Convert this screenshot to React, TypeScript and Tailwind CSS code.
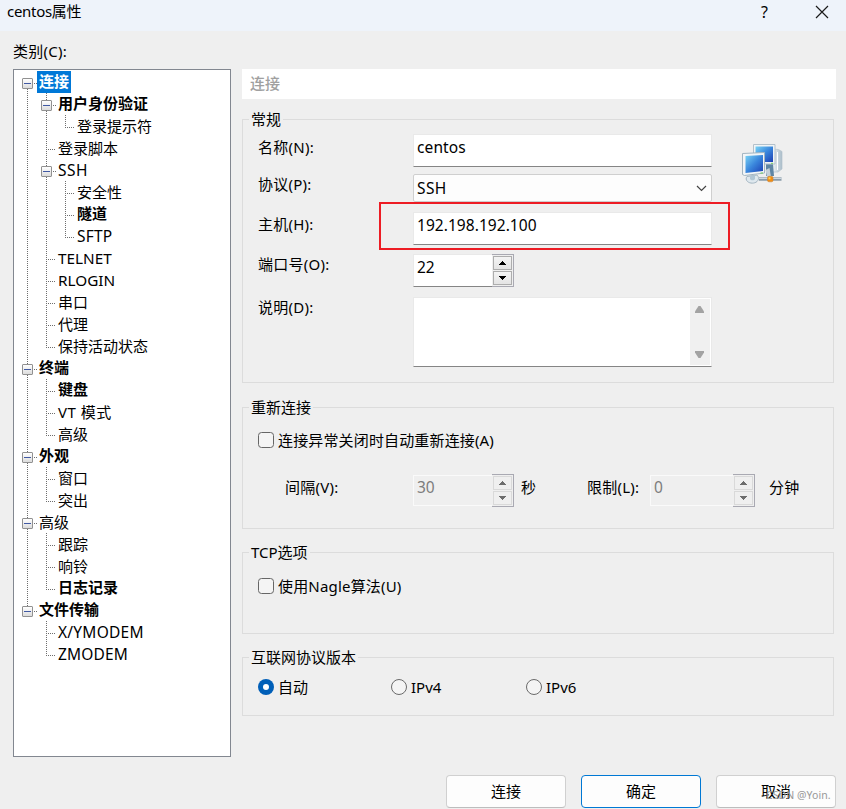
import React from "react";

type Guide = "line" | "blank" | "tee" | "end" | "first" | "mid" | "last";

interface Node {
  guides: Guide[];
  label: string;
  bold?: boolean;
  selected?: boolean;
  className?: string;
}

const NODES: Node[] = [
  { guides: ["first"], label: "连接", bold: true, selected: true },
  { guides: ["line", "mid"], label: "用户身份验证", bold: true },
  { guides: ["line", "line", "end"], label: "登录提示符" },
  { guides: ["line", "tee"], label: "登录脚本" },
  { guides: ["line", "mid"], label: "SSH", className: "text-[15.5px] tracking-[0.5px]" },
  { guides: ["line", "line", "tee"], label: "安全性" },
  { guides: ["line", "line", "tee"], label: "隧道", bold: true },
  { guides: ["line", "line", "end"], label: "SFTP", className: "text-[15.5px] tracking-[0.2px]" },
  { guides: ["line", "tee"], label: "TELNET", className: "text-[15.3px]" },
  { guides: ["line", "tee"], label: "RLOGIN", className: "text-[15.3px]" },
  { guides: ["line", "tee"], label: "串口" },
  { guides: ["line", "tee"], label: "代理" },
  { guides: ["line", "end"], label: "保持活动状态" },
  { guides: ["mid"], label: "终端", bold: true },
  { guides: ["line", "tee"], label: "键盘", bold: true },
  { guides: ["line", "tee"], label: "VT 模式", className: "tracking-[0.5px]" },
  { guides: ["line", "end"], label: "高级" },
  { guides: ["mid"], label: "外观", bold: true },
  { guides: ["line", "tee"], label: "窗口" },
  { guides: ["line", "end"], label: "突出" },
  { guides: ["mid"], label: "高级" },
  { guides: ["line", "tee"], label: "跟踪" },
  { guides: ["line", "tee"], label: "响铃" },
  { guides: ["line", "end"], label: "日志记录", bold: true },
  { guides: ["last"], label: "文件传输", bold: true },
  { guides: ["blank", "tee"], label: "X/YMODEM", className: "text-[15.5px] tracking-[0.25px]" },
  { guides: ["blank", "end"], label: "ZMODEM", className: "text-[15.5px] tracking-[0.15px]" },
];

const V = "w-px bg-[repeating-linear-gradient(to_bottom,#6e6e6e_0_1px,transparent_1px_2px)]";
const H = "h-px bg-[repeating-linear-gradient(to_right,#6e6e6e_0_1px,transparent_1px_2px)]";

function GuideCell({ kind }: { kind: Guide }) {
  if (kind === "blank") return <div className="w-[19px]" />;
  if (kind === "line")
    return (
      <div className="w-[19px] pl-[9px]">
        <div className={`${V} h-[22px]`} />
      </div>
    );
  if (kind === "tee" || kind === "end")
    return (
      <div className="flex w-[19px] items-start pl-[9px]">
        <div className={`${V} ${kind === "tee" ? "h-[22px]" : "h-[13px]"}`} />
        <div className={`${H} mt-3 ml-px w-[7px]`} />
      </div>
    );
  return (
    <div className="flex w-[19px] flex-col pl-1">
      <div className={`ml-[5px] h-[7px] ${kind === "first" ? "" : V}`} />
      <div className="flex items-center">
        <div className="flex h-[11px] w-[11px] shrink-0 items-center justify-center rounded-[1px] border border-[#919191] bg-linear-to-b from-white to-[#dcdcdc]">
          <div className="h-px w-[7px] bg-[#4059a3]" />
        </div>
        <div className={`${H} ml-px w-[3px]`} />
      </div>
      <div className={`ml-[5px] h-1 ${kind === "last" ? "" : V}`} />
    </div>
  );
}

function TreeRow({ node }: { node: Node }) {
  return (
    <div className="flex h-[22px]">
      {node.guides.map((g, i) => (
        <GuideCell key={i} kind={g} />
      ))}
      <span
        className={`h-[22px] px-[2px] whitespace-pre ${node.bold ? "leading-[20px] font-bold" : "leading-[22px]"} ${
          node.selected ? "bg-[#0078d7] text-white" : ""
        } ${node.className ?? ""}`}
      >
        {node.label}
      </span>
    </div>
  );
}

function Group({ title, className, children }: { title: string; className: string; children: React.ReactNode }) {
  return (
    <fieldset className={`w-[592px] border border-[#dcdcdc] ${className}`}>
      <legend className="ml-[6px] h-[21px] px-[2px] leading-[21px] whitespace-nowrap">{title}</legend>
      {children}
    </fieldset>
  );
}

function Label({ className, children }: { className: string; children: React.ReactNode }) {
  return <div className={`shrink-0 leading-5 tracking-[0.25px] whitespace-nowrap ${className}`}>{children}</div>;
}

function TextBox({ className = "", children }: { className?: string; children?: React.ReactNode }) {
  return (
    <div
      className={`h-[33px] w-[299px] border border-[#e9e9e9] border-b-[#858585] bg-white pl-[3px] text-[15.5px] leading-[25px] ${className}`}
    >
      {children}
    </div>
  );
}

function Arrow({ down, disabled }: { down?: boolean; disabled?: boolean }) {
  return (
    <div
      className={`flex h-[14px] w-[19px] items-center justify-center border ${
        disabled ? "border-[#d9d9d9] bg-[#efefef]" : "border-[#adadad] bg-linear-to-b from-[#f4f4f4] to-[#e4e4e4]"
      }`}
    >
      <svg width="7" height="4" viewBox="0 0 7 4" shapeRendering="crispEdges">
        <path
          d={down ? "M0 0h7v1H0zM1 1h5v1H1zM2 2h3v1H2zM3 3h1v1H3z" : "M3 0h1v1H3zM2 1h3v1H2zM1 2h5v1H1zM0 3h7v1H0z"}
          fill={disabled ? "#6d6d6d" : "#000"}
        />
      </svg>
    </div>
  );
}

function Spin({ value, fieldClass, disabled }: { value: string; fieldClass: string; disabled?: boolean }) {
  return (
    <div className="flex h-[33px] shrink-0">
      <div
        className={`border pl-[3px] text-[15.5px] ${fieldClass} ${
          disabled
            ? "my-px h-[31px] border-r-0 border-[#fafafa] leading-[23px] text-[#7d7d7d]"
            : "h-[33px] border-r-0 border-[#e9e9e9] border-b-[#858585] bg-white leading-[25px]"
        }`}
      >
        {value}
      </div>
      <div className="flex h-[33px] w-[22px] flex-col gap-px border border-l-0 border-[#a9a9b2] pt-px pl-px">
        <Arrow disabled={disabled} />
        <Arrow down disabled={disabled} />
      </div>
    </div>
  );
}

function Check({ className, label }: { className: string; label: string }) {
  return (
    <div className={`flex items-center pl-[15px] ${className}`}>
      <div className="h-4 w-4 rounded-[3.5px] border border-[#666] bg-[#f4f4f4]" />
      <span className="ml-1 leading-5">{label}</span>
    </div>
  );
}

function Radio({ checked, label, className }: { checked?: boolean; label: string; className: string }) {
  return (
    <div className={`flex items-center ${className}`}>
      <div
        className={`flex h-4 w-4 items-center justify-center rounded-full ${
          checked ? "bg-[#005fb8]" : "border border-[#6a6a6a] bg-[#f4f4f4]"
        }`}
      >
        {checked && <div className="h-[6px] w-[6px] rounded-full bg-white" />}
      </div>
      <span className="ml-1 leading-5">{label}</span>
    </div>
  );
}

function Computers() {
  return (
    <svg width="42" height="42" viewBox="0 0 42 42" className="mt-[10px] ml-[30px]">
      <defs>
        <linearGradient id="scr" x1="0" y1="0" x2="1" y2="1">
          <stop offset="0" stopColor="#79d3f5" />
          <stop offset="0.5" stopColor="#3a86dc" />
          <stop offset="1" stopColor="#1c40b4" />
        </linearGradient>
        <linearGradient id="tower" x1="0" y1="0" x2="1" y2="0">
          <stop offset="0" stopColor="#f5f8fa" />
          <stop offset="1" stopColor="#a9bcc9" />
        </linearGradient>
      </defs>
      <path d="M31 5l5.500 0.500 3.500 2v17.500l-4 3h-6z" fill="url(#tower)" stroke="#b4c3cd" strokeWidth="0.700" />
      <path d="M35.500 8v18" stroke="#fff" />
      <path d="M24 20h7l1 12h-8z" fill="#5f86a4" />
      <path d="M11.500 0.500h21.500v19.500h-21.500z" fill="#f0f4f6" stroke="#b3c1cb" />
      <path d="M13.500 2.500h17.500v15.500h-17.500z" fill="url(#scr)" />
      <path d="M17 35h22.500" stroke="#8a9caa" strokeWidth="3.500" />
      <path d="M17 34.300h22.500" stroke="#dfe7ec" strokeWidth="1" />
      <path d="M23.500 26l4-2 1.500 9h-4z" fill="#c5d0d8" />
      <path d="M5 32.500l10-1.500c2 2 2 4.500 0 6.500-2.500 2.200-7 2.200-9.500 0-1.700-1.500-1.700-3.500-0.500-5z" fill="#dfe8ee" stroke="#a3b5c1" />
      <path d="M8 32v3c1 1.800 4 1.800 5 0v-4z" fill="#b1c6d5" />
      <path d="M0.500 9.500l22-1v20.500l-20 2.500-2-1z" fill="#f2f5f7" stroke="#a3b5c1" />
      <path d="M3.500 12l17.500-1v16l-17.500 2z" fill="url(#scr)" />
      <path d="M18.500 29h2.500M29 19.300h2" stroke="#6ed058" />
      <rect x="25.500" y="32.300" width="5.500" height="5.500" rx="1.500" fill="#f28d12" stroke="#c78640" strokeWidth="0.600" />
      <path d="M26.500 33.300h2v2h-2z" fill="#ffd14c" />
    </svg>
  );
}

function Button({ label, primary }: { label: string; primary?: boolean }) {
  return (
    <div
      className={`flex h-[33px] w-[120px] items-center justify-center rounded-[4px] border bg-[#fdfdfd] ${
        primary ? "border-[#0078d4]" : "border-[#d0d0d0] border-b-[#bdbdbd]"
      }`}
    >
      {label}
    </div>
  );
}

export default function App() {
  return (
    <div className="relative flex h-[809px] w-[846px] flex-col overflow-hidden bg-[#efefef] font-['Noto_Sans','Noto_Sans_CJK_SC',sans-serif] text-[15px] text-black">
      <header className="flex h-[31px] shrink-0 items-start bg-[#eef3fa] pl-[7px]">
        <span className="mt-px leading-5 tracking-[-0.3px]">centos属性</span>
        <span className="mt-[2px] ml-auto w-[8px] text-[16px] leading-5">?</span>
        <svg width="14" height="14" viewBox="0 0 14 14" className="mt-[5px] mr-[17px] ml-[46px]">
          <path d="M1 1l12 12M13 1L1 13" stroke="#1a1a1a" strokeWidth="1.200" />
        </svg>
      </header>

      <main className="flex h-[726px] shrink-0 pl-[13px]">
        <aside className="w-[218px]">
          <div className="h-[38px] pt-[10px] leading-5 tracking-[0.25px]">类别(C):</div>
          <div className="h-[688px] border border-[#828790] bg-white pt-px pl-1">
            {NODES.map((n, i) => (
              <TreeRow key={i} node={n} />
            ))}
          </div>
        </aside>

        <section className="ml-[11px] w-[594px] pt-[38px]">
          <div className="h-[30px] bg-white pl-2 leading-[28px] font-medium text-[#a0a0a0]">连接</div>

          <Group title="常规" className="mt-[10px] h-[274px]">
            <div className="flex pt-1 pl-[15px]">
              <div className="flex flex-col">
                <div className="flex h-10">
                  <Label className="w-[155px] pt-[3px]">名称(N):</Label>
                  <TextBox className="tracking-[0.1px]">centos</TextBox>
                </div>
                <div className="flex h-[38px]">
                  <Label className="w-[155px]">协议(P):</Label>
                  <div className="flex h-7 w-[299px] items-center justify-between rounded-[2px] border border-[#cfcfcf] bg-[#fdfdfd] pr-[4px] pl-[3px] text-[15.5px] tracking-[0.4px]">
                    <span className="pt-px">SSH</span>
                    <svg width="11" height="7" viewBox="0 0 11 7">
                      <path d="M1 1l4.500 4.500L10 1" fill="none" stroke="#444" strokeWidth="1.200" />
                    </svg>
                  </div>
                </div>
                <div className="relative flex h-[42px]">
                  <Label className="w-[155px] pt-[2px]">主机(H):</Label>
                  <TextBox className="tracking-[0.05px]">192.198.192.100</TextBox>
                  <div className="absolute top-[-10px] left-[121px] h-12 w-[351px] border-2 border-[#ed1c24]" />
                </div>
                <div className="flex h-[43px]">
                  <Label className="w-[155px]">端口号(O):</Label>
                  <Spin value="22" fieldClass="w-[79px]" />
                </div>
                <div className="flex">
                  <Label className="w-[155px]">说明(D):</Label>
                  <div className="flex h-[70px] w-[299px] justify-end border border-[#e9e9e9] border-b-[#858585] bg-white pt-px pr-px pb-px">
                    <div className="flex w-5 flex-col items-start justify-between bg-[#f0f0f0] py-[7px] pl-[5px]">
                      <svg width="9" height="7" viewBox="0 0 9 7">
                        <path d="M3.500 0h2L9 5.500V7H0V5.500z" fill="#a3a3a3" />
                      </svg>
                      <svg width="9" height="7" viewBox="0 0 9 7">
                        <path d="M3.500 7h2L9 1.500V0H0v1.500z" fill="#a3a3a3" />
                      </svg>
                    </div>
                  </div>
                </div>
              </div>
              <Computers />
            </div>
          </Group>

          <Group title="重新连接" className="mt-[14px] h-[132px]">
            <Check className="mt-3 h-5 tracking-[0.15px]" label="连接异常关闭时自动重新连接(A)" />
            <div className="mt-6 flex pl-[42px]">
              <Label className="w-[128px] pt-[3px]">间隔(V):</Label>
              <Spin value="30" fieldClass="w-[79px] shrink-0" disabled />
              <Label className="w-[73px] pt-[3px] pl-[7px]">秒</Label>
              <Label className="w-[63px] pt-[3px]">限制(L):</Label>
              <Spin value="0" fieldClass="w-[83px] shrink-0" disabled />
              <Label className="w-[45px] pt-[3px] pl-[14px]">分钟</Label>
            </div>
          </Group>

          <Group title="TCP选项" className="mt-[13px] h-[92px]">
            <Check className="mt-[13px] h-5 tracking-[0.18px]" label="使用Nagle算法(U)" />
          </Group>

          <Group title="互联网协议版本" className="mt-[13px] h-[69px]">
            <div className="mt-[9px] flex pl-[15px]">
              <Radio checked label="自动" className="w-[133px]" />
              <Radio label="IPv4" className="w-[135px]" />
              <Radio label="IPv6" className="w-[135px]" />
            </div>
          </Group>
        </section>
      </main>

      <footer className="mt-[18px] flex justify-end gap-[15px] pr-[10px]">
        <Button label="连接" />
        <Button label="确定" primary />
        <Button label="取消" />
      </footer>
      <div className="absolute top-[788px] left-[766px] text-[10.5px] leading-[14px] tracking-[0.05px] whitespace-nowrap text-[#999]">
        CSDN @Yoin.
      </div>
    </div>
  );
}
